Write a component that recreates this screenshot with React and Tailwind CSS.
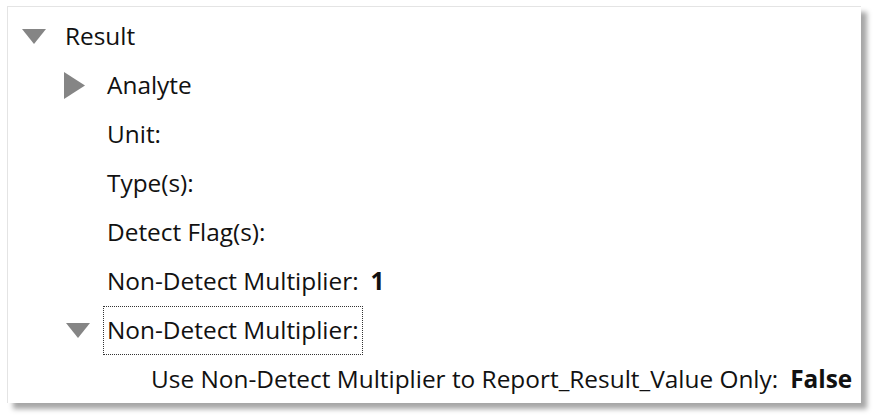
import React from 'react';

const Down = ({ className }) => (
  <svg width="24" height="15" viewBox="0 0 24 15" className={className}>
    <polygon points="0,0 24,0 12,15" fill="#858585" />
  </svg>
);

const Right = ({ className }) => (
  <svg width="21" height="27" viewBox="0 0 21 27" className={className}>
    <polygon points="0,0 21,13.5 0,27" fill="#858585" />
  </svg>
);

const Row = ({ indent, icon, children }) => (
  <div className="flex items-center h-[49px]" style={{ paddingLeft: indent }}>
    <div className="w-[43px] flex items-center justify-start shrink-0">{icon}</div>
    {children}
  </div>
);

const App = () => {
  return (
    <div className="w-[875px] h-[417px] bg-white pt-[6px] pl-[7px]" style={{ fontFamily: '"Open Sans", "Noto Sans", sans-serif' }}>
      <div className="w-[854px] h-[397px] bg-white border-l border-t border-[#e4e4e4] shadow-[6px_6px_5px_rgba(0,0,0,0.35)] pt-[5px] text-[24.4px] leading-none text-[#111]">
        <Row indent={14} icon={<Down />}>
          <span>Result</span>
        </Row>
        <Row indent={56} icon={<Right />}>
          <span>Analyte</span>
        </Row>
        <Row indent={56}>
          <span>Unit:</span>
        </Row>
        <Row indent={56}>
          <span>Type(s):</span>
        </Row>
        <Row indent={56}>
          <span>Detect Flag(s):</span>
        </Row>
        <Row indent={56}>
          <span>Non-Detect Multiplier:</span>
          <span className="font-bold ml-[12px]">1</span>
        </Row>
        <Row indent={58} icon={<Down />}>
          <span className="border border-dotted border-[#333] px-[3px] py-[11px] -ml-[6px]">Non-Detect Multiplier:</span>
        </Row>
        <Row indent={100}>
          <span>Use Non-Detect Multiplier to Report_Result_Value Only:</span>
          <span className="font-bold ml-[12px]">False</span>
        </Row>
      </div>
    </div>
  );
};

export default App;
